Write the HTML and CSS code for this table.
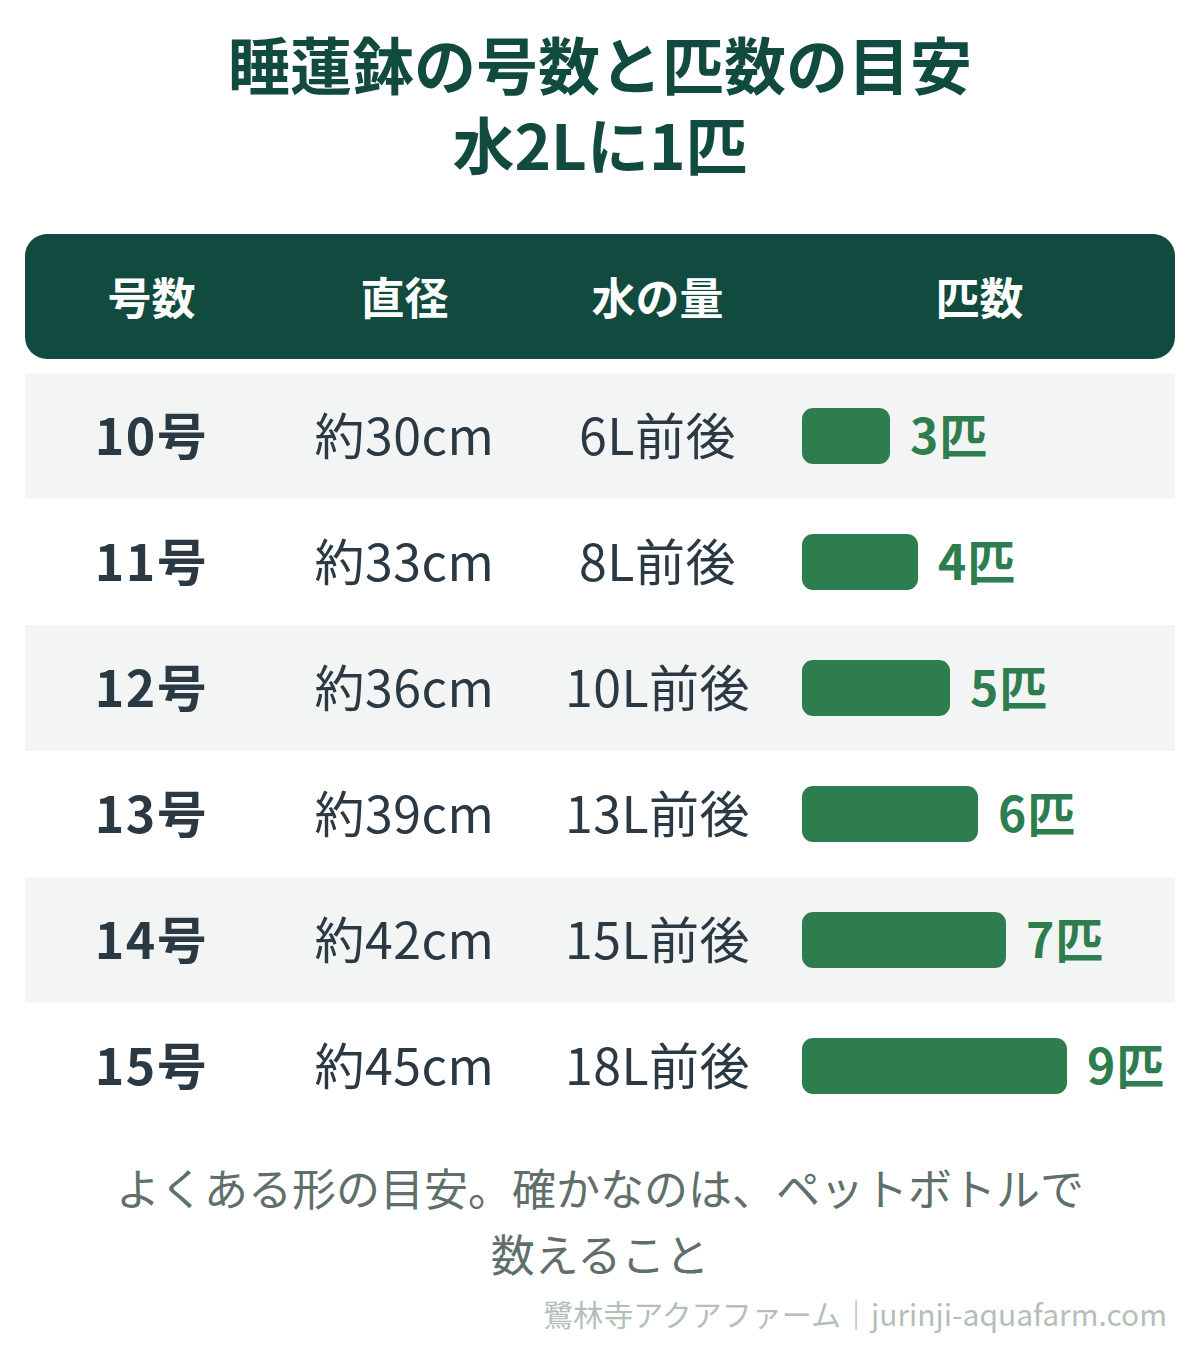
FILE: index.html
```html
<!DOCTYPE html>
<html lang="ja">
<head>
<meta charset="utf-8">
<title>睡蓮鉢の号数と匹数の目安</title>
<link rel="stylesheet" href="styles.css">
</head>
<body>
<div class="page">
  <h1 class="title"><span class="tline">睡蓮鉢の号数と匹数の目安</span><span class="tline">水2Lに1匹</span></h1>
  <div class="table">
    <div class="head">
      <div class="hcell">号数</div>
      <div class="hcell">直径</div>
      <div class="hcell">水の量</div>
      <div class="hcell">匹数</div>
    </div>
    <div class="row alt">
      <div class="cell num">10号</div>
      <div class="cell">約30cm</div>
      <div class="cell">6L前後</div>
      <div class="cell fish"><span class="bar" style="width:88px"></span><span class="count">3匹</span></div>
    </div>
    <div class="row">
      <div class="cell num">11号</div>
      <div class="cell">約33cm</div>
      <div class="cell">8L前後</div>
      <div class="cell fish"><span class="bar" style="width:116px"></span><span class="count">4匹</span></div>
    </div>
    <div class="row alt">
      <div class="cell num">12号</div>
      <div class="cell">約36cm</div>
      <div class="cell">10L前後</div>
      <div class="cell fish"><span class="bar" style="width:148px"></span><span class="count">5匹</span></div>
    </div>
    <div class="row">
      <div class="cell num">13号</div>
      <div class="cell">約39cm</div>
      <div class="cell">13L前後</div>
      <div class="cell fish"><span class="bar" style="width:176px"></span><span class="count">6匹</span></div>
    </div>
    <div class="row alt">
      <div class="cell num">14号</div>
      <div class="cell">約42cm</div>
      <div class="cell">15L前後</div>
      <div class="cell fish"><span class="bar" style="width:204px"></span><span class="count">7匹</span></div>
    </div>
    <div class="row">
      <div class="cell num">15号</div>
      <div class="cell">約45cm</div>
      <div class="cell">18L前後</div>
      <div class="cell fish"><span class="bar" style="width:265px"></span><span class="count">9匹</span></div>
    </div>
  </div>
  <p class="note">よくある形の目安。確かなのは、ペットボトルで数えること</p>
  <p class="credit">鷺林寺アクアファーム｜jurinji-aquafarm.com</p>
</div>
</body>
</html>
```

FILE: styles.css
```css
* { box-sizing: border-box; }
html, body {
  margin: 0;
  padding: 0;
  background: #ffffff;
}
body {
  font-family: "Noto Sans CJK JP", "Noto Sans", sans-serif;
  color: #2b3944;
}
.page {
  width: 1200px;
  padding: 23px 25px 0 25px;
}
.title {
  margin: 0;
  text-align: center;
  font-size: 62px;
  font-weight: 700;
  color: #114a3e;
  display: flex;
  flex-direction: column;
  align-items: center;
}
.tline {
  display: block;
  height: 80px;
  line-height: 80px;
}
.table {
  margin-top: 51px;
}
.head {
  display: grid;
  grid-template-columns: 253px 253px 253px 1fr;
  height: 125px;
  background: #114a3e;
  border-radius: 22px;
  align-items: center;
}
.hcell {
  text-align: center;
  color: #ffffff;
  font-size: 44px;
  font-weight: 700;
  padding-bottom: 2px;
}
.row {
  display: grid;
  grid-template-columns: 253px 253px 253px 1fr;
  height: 126px;
  align-items: center;
}
.table .head + .row { margin-top: 14px; }
.row.alt { background: #f3f5f4; }
.cell {
  text-align: center;
  font-size: 50px;
  font-weight: 400;
  letter-spacing: 0.5px;
  padding-bottom: 6px;
}
.cell.num { font-weight: 700; letter-spacing: 1.5px; }
.cell.fish {
  display: flex;
  align-items: center;
  gap: 20px;
  padding-left: 18px;
  padding-bottom: 0;
  text-align: left;
}
.bar {
  display: block;
  height: 56px;
  background: #2e7d4f;
  border-radius: 11px;
}
.count {
  color: #2e7d4f;
  font-weight: 700;
  font-size: 48px;
  letter-spacing: 1px;
  padding-bottom: 6px;
}
.note {
  margin: 25px auto 0 auto;
  width: 1000px;
  text-align: center;
  font-size: 44px;
  line-height: 66px;
  color: #5f6f69;
}
.credit {
  margin: 7px 8px 0 0;
  text-align: right;
  font-size: 30px;
  line-height: 40px;
  color: #b3bfb8;
}
```
